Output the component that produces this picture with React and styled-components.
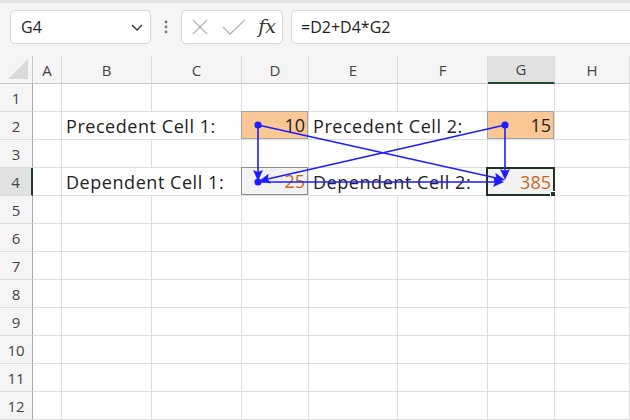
import React from "react";
import styled, { createGlobalStyle } from "styled-components";

const Global = createGlobalStyle`
  html, body { margin: 0; padding: 0; background: #ffffff; }
  body { font-family: "Open Sans", "Liberation Sans", sans-serif; }
`;

const Frame = styled.div`
  position: relative;
  width: 630px;
  height: 420px;
  overflow: hidden;
  background: #ffffff;
`;

const TopBar = styled.div`
  height: 56px;
  box-sizing: border-box;
  background: #f5f5f5;
  border-top: 3px solid #e4e4e4;
  display: flex;
  align-items: center;
  padding: 0 0 5px 10px;
`;

const Box = styled.div`
  height: 34px;
  box-sizing: border-box;
  background: #ffffff;
  border: 1px solid #d6d6d6;
  border-radius: 5px;
  display: flex;
  align-items: center;
`;

const NameBox = styled(Box)`
  width: 141px;
  padding: 0 6px 0 10px;
  justify-content: space-between;
  font-size: 16px;
  color: #222;
`;

const Kebab = styled.div`
  width: 30px;
  display: flex;
  justify-content: center;
  color: #777;
`;

const FxBox = styled(Box)`
  width: 102px;
  margin-right: 8px;
  padding: 0 6px 0 9px;
  justify-content: space-between;
`;

const Fx = styled.span`
  font-family: "DejaVu Serif", "Liberation Serif", serif;
  font-style: italic;
  font-size: 19px;
  color: #333;
  margin-top: -2px;
`;

const FormulaBox = styled(Box)`
  flex: 1;
  border-right: none;
  border-radius: 5px 0 0 5px;
  padding-left: 9px;
  font-size: 16px;
  color: #222;
`;

const Grid = styled.div`
  display: grid;
  grid-template-columns: 33px 29px 90px 90px 67px 89px 90px 67px 75px;
  grid-auto-rows: 28px;
`;

const ColHead = styled.div`
  box-sizing: border-box;
  background: ${(p) => (p.$active ? "#e1e1e1" : "#f5f5f5")};
  border-right: 1px solid #dcdcdc;
  border-bottom: ${(p) => (p.$active ? "2px solid #1f4a2c" : "1px solid #c8c8c8")};
  display: flex;
  align-items: center;
  justify-content: center;
  font-size: 15px;
  color: #444;
`;

const Corner = styled.div`
  box-sizing: border-box;
  background: #f5f5f5;
  border-right: 1px solid #c8c8c8;
  border-bottom: 1px solid #c8c8c8;
  display: flex;
  align-items: flex-end;
  justify-content: flex-end;
  padding: 0 4px 4px 0;
`;

const RowHead = styled.div`
  box-sizing: border-box;
  background: ${(p) => (p.$active ? "#e1e1e1" : "#f5f5f5")};
  border-right: ${(p) => (p.$active ? "2px solid #1f3a27" : "1px solid #a8a8a8")};
  border-bottom: 1px solid #dcdcdc;
  display: flex;
  align-items: center;
  justify-content: center;
  font-size: 15px;
  color: #444;
`;

const Cell = styled.div`
  position: relative;
  box-sizing: border-box;
  grid-column: span ${(p) => p.$span || 1};
  border-right: 1px solid #dedede;
  border-bottom: 1px solid #dedede;
  background: ${(p) => p.$bg || "#ffffff"};
  display: flex;
  align-items: center;
  justify-content: ${(p) => (p.$num ? "flex-end" : "flex-start")};
  padding: ${(p) => (p.$num ? "0 3px 0 0" : "0 0 0 4px")};
  font-size: 18px;
  letter-spacing: ${(p) => (p.$num ? "0" : "0.55px")};
  color: ${(p) => p.$color || "#222"};
  white-space: nowrap;
  ${(p) => p.$outline && `box-shadow: inset 0 0 0 1px ${p.$outline}; margin: -1px 0 0 -1px; width: calc(100% + 1px); height: 29px;`}
`;

const Selection = styled.div`
  position: absolute;
  inset: -1px -1px -1px -2px;
  border: 2px solid #1f3324;
  pointer-events: none;
`;

const Handle = styled.div`
  position: absolute;
  right: -5px;
  bottom: -5px;
  width: 6px;
  height: 6px;
  background: #1f3324;
  border: 1px solid #ffffff;
`;

const Overlay = styled.svg`
  position: absolute;
  left: 0;
  top: 0;
  pointer-events: none;
`;

const BLUE = "#1d1dff";

function Arrow({ x1, y1, x2, y2 }) {
  const dx = x2 - x1;
  const dy = y2 - y1;
  const len = Math.hypot(dx, dy);
  const ux = dx / len;
  const uy = dy / len;
  const L = 11;
  const W = 5;
  const bx = x2 - ux * L;
  const by = y2 - uy * L;
  const pts = `${x2},${y2} ${bx - uy * W},${by + ux * W} ${bx + ux * 2},${by + uy * 2} ${bx + uy * W},${by - ux * W}`;
  return (
    <g>
      <line x1={x1} y1={y1} x2={bx + ux * 2} y2={by + uy * 2} stroke={BLUE} strokeWidth="1.6" />
      <polygon points={pts} fill={BLUE} />
    </g>
  );
}

const cols = ["A", "B", "C", "D", "E", "F", "G", "H"];

const PEACH = "#f9c894";
const GREYFILL = "#f2f2f2";
const ORANGE = "#c8691c";

function Row({ n, children }) {
  return (
    <>
      <RowHead $active={n === 4}>{n}</RowHead>
      {children}
    </>
  );
}

function Blank() {
  return (
    <>
      {cols.map((c) => (
        <Cell key={c} />
      ))}
    </>
  );
}

export default function App() {
  const rows = [];
  for (let n = 1; n <= 12; n++) {
    if (n === 2) {
      rows.push(
        <Row key={n} n={n}>
          <Cell />
          <Cell $span={2}>Precedent Cell 1:</Cell>
          <Cell $num $bg={PEACH} $outline="#a3a3a3">10</Cell>
          <Cell $span={2}>Precedent Cell 2:</Cell>
          <Cell $num $bg={PEACH} $outline="#a3a3a3">15</Cell>
          <Cell />
        </Row>
      );
    } else if (n === 4) {
      rows.push(
        <Row key={n} n={n}>
          <Cell />
          <Cell $span={2}>Dependent Cell 1:</Cell>
          <Cell $num $bg={GREYFILL} $outline="#8c8c8c" $color={ORANGE}>25</Cell>
          <Cell $span={2}>Dependent Cell 2:</Cell>
          <Cell $num $bg={GREYFILL} $color={ORANGE}>
            385
            <Selection>
              <Handle />
            </Selection>
          </Cell>
          <Cell />
        </Row>
      );
    } else {
      rows.push(
        <Row key={n} n={n}>
          <Blank />
        </Row>
      );
    }
  }

  return (
    <Frame>
      <Global />
      <TopBar>
        <NameBox>
          <span>G4</span>
          <svg width="14" height="14" viewBox="0 0 14 14">
            <path d="M2 5 L7 10 L12 5" fill="none" stroke="#333" strokeWidth="1.4" />
          </svg>
        </NameBox>
        <Kebab>
          <svg width="4" height="16" viewBox="0 0 4 16">
            <circle cx="2" cy="3" r="1.4" fill="#777" />
            <circle cx="2" cy="8" r="1.4" fill="#777" />
            <circle cx="2" cy="13" r="1.4" fill="#777" />
          </svg>
        </Kebab>
        <FxBox>
          <svg width="18" height="18" viewBox="0 0 18 18">
            <path d="M2 2 L16 16 M16 2 L2 16" stroke="#b5b5b5" strokeWidth="1.3" fill="none" />
          </svg>
          <svg width="24" height="18" viewBox="0 0 24 18">
            <path d="M1 9 L8 16 L23 2" stroke="#b5b5b5" strokeWidth="1.3" fill="none" />
          </svg>
          <Fx>fx</Fx>
        </FxBox>
        <FormulaBox>=D2+D4*G2</FormulaBox>
      </TopBar>
      <Grid>
        <Corner>
          <svg width="20" height="20" viewBox="0 0 20 20">
            <polygon points="20,0 20,20 0,20" fill="#dadada" />
          </svg>
        </Corner>
        {cols.map((c) => (
          <ColHead key={c} $active={c === "G"}>
            {c}
          </ColHead>
        ))}
        {rows}
      </Grid>
      <Overlay width="630" height="420" viewBox="0 0 630 420">
        <Arrow x1={258} y1={125} x2={258} y2={181} />
        <Arrow x1={258} y1={125} x2={505} y2={180} />
        <Arrow x1={505} y1={125} x2={259} y2={181} />
        <Arrow x1={505} y1={125} x2={505} y2={180} />
        <Arrow x1={258} y1={182} x2={504} y2={182} />
        <circle cx="258" cy="125" r="3.6" fill={BLUE} />
        <circle cx="505" cy="125" r="3.6" fill={BLUE} />
        <circle cx="258" cy="182" r="3.6" fill={BLUE} />
      </Overlay>
    </Frame>
  );
}
